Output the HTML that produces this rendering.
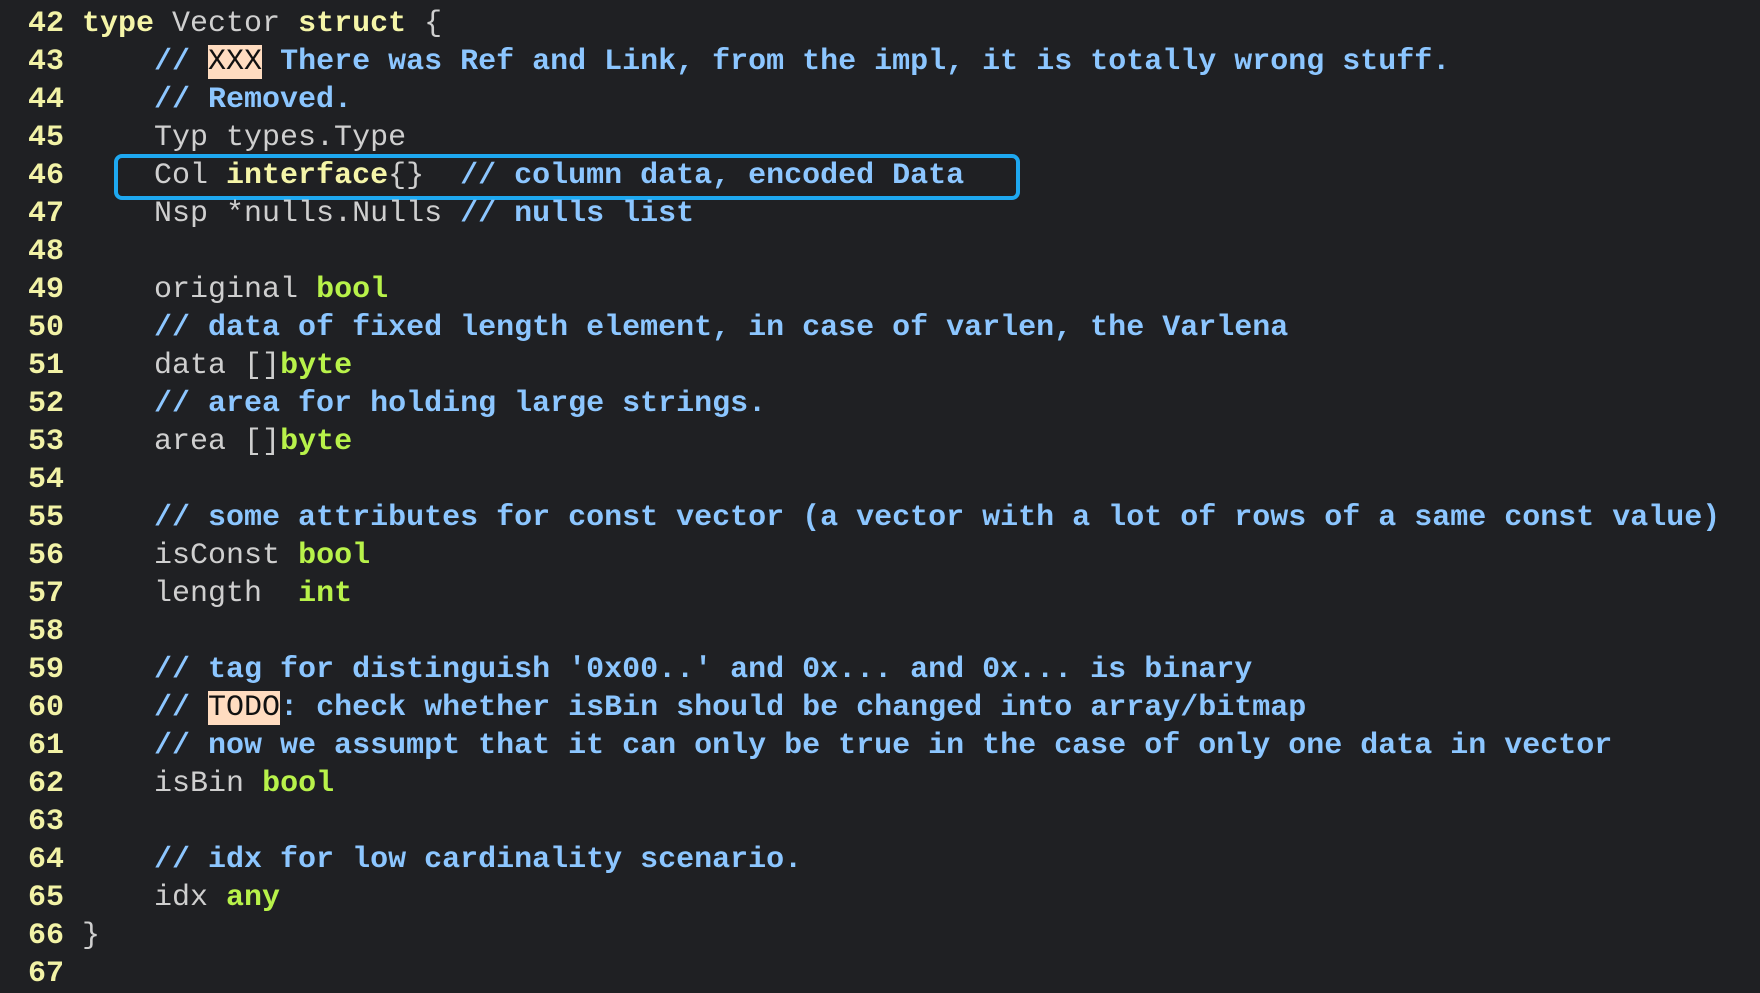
<!DOCTYPE html>
<html><head><meta charset="utf-8"><style>
html,body{margin:0;padding:0;background:#1f2023;width:1760px;height:964px;overflow:hidden}
pre{margin:0;position:absolute;left:28px;top:5px;font-family:"Liberation Mono",monospace;font-size:30px;line-height:38px;color:#cfcfcf;white-space:pre}
.n{color:#f2f2a6;font-weight:bold}
.k{color:#f5f5a8;font-weight:bold}
.c{color:#8cc6ff;font-weight:bold}
.t{color:#b8f24a;font-weight:bold}
.h{background:#ffdcc0;color:#111}
.box{position:absolute;left:114px;top:154px;width:898px;height:38px;border:4px solid #1ea8f0;border-radius:8px}
</style></head><body>
<div class="box"></div>
<pre><span class="n">42</span> <span class="k">type</span> Vector <span class="k">struct</span> {
<span class="n">43</span>     <span class="c">// </span><span class="h">XXX</span><span class="c"> There was Ref and Link, from the impl, it is totally wrong stuff.</span>
<span class="n">44</span>     <span class="c">// Removed.</span>
<span class="n">45</span>     Typ types.Type
<span class="n">46</span>     Col <span class="k">interface</span>{}  <span class="c">// column data, encoded Data</span>
<span class="n">47</span>     Nsp *nulls.Nulls <span class="c">// nulls list</span>
<span class="n">48</span>
<span class="n">49</span>     original <span class="t">bool</span>
<span class="n">50</span>     <span class="c">// data of fixed length element, in case of varlen, the Varlena</span>
<span class="n">51</span>     data []<span class="t">byte</span>
<span class="n">52</span>     <span class="c">// area for holding large strings.</span>
<span class="n">53</span>     area []<span class="t">byte</span>
<span class="n">54</span>
<span class="n">55</span>     <span class="c">// some attributes for const vector (a vector with a lot of rows of a same const value)</span>
<span class="n">56</span>     isConst <span class="t">bool</span>
<span class="n">57</span>     length  <span class="t">int</span>
<span class="n">58</span>
<span class="n">59</span>     <span class="c">// tag for distinguish '0x00..' and 0x... and 0x... is binary</span>
<span class="n">60</span>     <span class="c">// </span><span class="h">TODO</span><span class="c">: check whether isBin should be changed into array/bitmap</span>
<span class="n">61</span>     <span class="c">// now we assumpt that it can only be true in the case of only one data in vector</span>
<span class="n">62</span>     isBin <span class="t">bool</span>
<span class="n">63</span>
<span class="n">64</span>     <span class="c">// idx for low cardinality scenario.</span>
<span class="n">65</span>     idx <span class="t">any</span>
<span class="n">66</span> }
<span class="n">67</span></pre>
</body></html>
